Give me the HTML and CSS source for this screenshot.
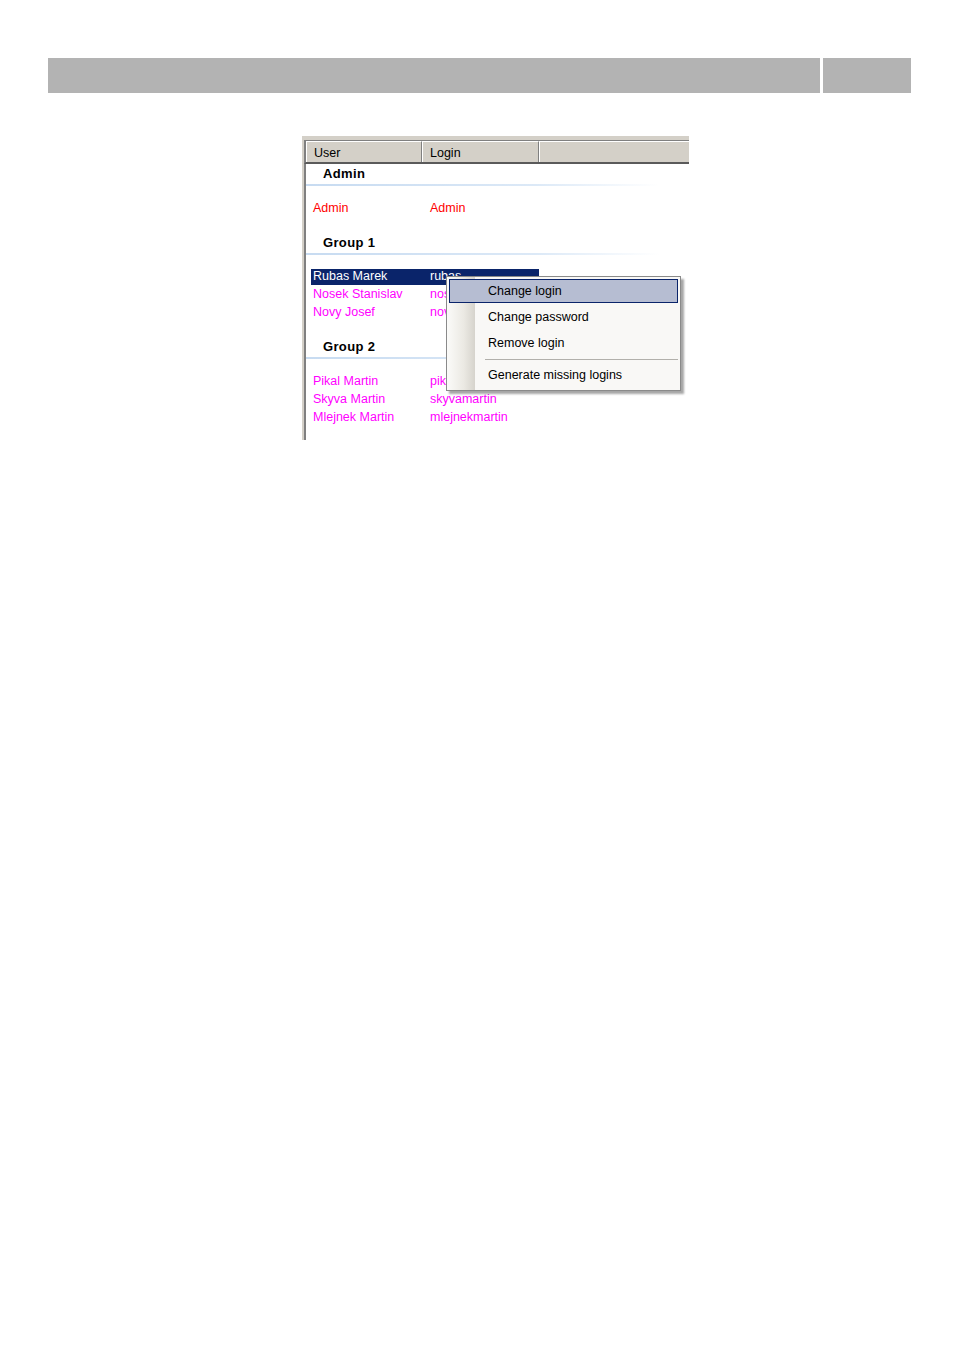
FILE: index.html
```html
<!DOCTYPE html>
<html>
<head>
<meta charset="utf-8">
<link rel="stylesheet" href="styles.css">
</head>
<body>
<div class="topbar">
  <div class="bar-main"></div>
  <div class="bar-side"></div>
</div>

<div class="shot">
  <div class="frame">
    <div class="header">
      <div class="hcol c1">User</div>
      <div class="hcol c2">Login</div>
      <div class="hcol c3"></div>
    </div>
    <div class="list">
      <div class="group">Admin</div>
      <div class="row red first"><span class="cu">Admin</span><span class="cl">Admin</span></div>

      <div class="group">Group 1</div>
      <div class="row sel first"><span class="cu">Rubas Marek</span><span class="cl">rubas</span></div>
      <div class="row mag"><span class="cu">Nosek Stanislav</span><span class="cl">nosekstanislav</span></div>
      <div class="row mag"><span class="cu">Novy Josef</span><span class="cl">novyjosef</span></div>

      <div class="group">Group 2</div>
      <div class="row mag first"><span class="cu">Pikal Martin</span><span class="cl">pikalmartin</span></div>
      <div class="row mag"><span class="cu">Skyva Martin</span><span class="cl">skyvamartin</span></div>
      <div class="row mag"><span class="cu">Mlejnek Martin</span><span class="cl">mlejnekmartin</span></div>
    </div>
  </div>

  <div class="menu">
    <div class="strip"></div>
    <div class="items">
      <div class="item hot">Change login</div>
      <div class="item">Change password</div>
      <div class="item">Remove login</div>
      <div class="sep"></div>
      <div class="item">Generate missing logins</div>
    </div>
  </div>
</div>
</body>
</html>
```
FILE: styles.css
```css
html, body {
  margin: 0;
  padding: 0;
  background: #ffffff;
}

body {
  font-family: "Liberation Sans", Arial, sans-serif;
}

.topbar {
  display: flex;
  gap: 3px;
  margin: 58px 0 0 48px;
  height: 35px;
}

.bar-main {
  width: 772px;
  background: #b3b3b3;
}

.bar-side {
  width: 88px;
  background: #b3b3b3;
}

.shot {
  position: relative;
  margin: 43px 0 0 302px;
  width: 387px;
  height: 304px;
  font-size: 12.5px;
}

.frame {
  height: 304px;
  box-sizing: border-box;
  border-top: 4px solid #d4d0c8;
  border-left: 2px solid #d4d0c8;
  display: flex;
  flex-direction: column;
}

.header {
  display: flex;
  height: 21px;
  border-top: 1px solid #808080;
  border-left: 2px solid #808080;
  background: #d4d0c8;
  border-bottom: 2px solid #5a5a5a;
  box-sizing: content-box;
}

.hcol {
  box-sizing: border-box;
  height: 100%;
  padding: 3px 0 0 7px;
  color: #000;
  border-top: 1px solid #ffffff;
  border-left: 1px solid #ffffff;
  border-right: 1px solid #808080;
  line-height: 16px;
}

.c1 { width: 116px; }
.c2 { width: 117px; }
.c3 { flex: 1; border-right: none; }

.list {
  flex: 1;
  border-left: 2px solid #808080;
  background: #fff;
  padding-top: 2px;
}

.group {
  font-weight: bold;
  font-size: 13px;
  letter-spacing: 0.35px;
  padding-left: 17px;
  height: 20px;
  line-height: 15px;
  box-sizing: border-box;
  border-bottom: 2px solid transparent;
  border-image: linear-gradient(to right, #c7dbf1 0%, #dce9f7 60%, rgba(255,255,255,0) 92%) 1;
  margin-bottom: 14px;
}

.group ~ .group {
  margin-top: 17px;
}

.row {
  display: flex;
  height: 18px;
  line-height: 17px;
  margin-left: 5px;
  width: 228px;
}

.row .cu {
  width: 118px;
  padding-left: 2px;
  box-sizing: border-box;
  white-space: nowrap;
  overflow: hidden;
}

.row .cl {
  padding-left: 1px;
  white-space: nowrap;
}

.red { color: #ff0000; }
.mag { color: #ff00ff; }

.sel {
  background: #0a246a;
  color: #ffffff;
  height: 16px;
  line-height: 15px;
  margin-bottom: 1px;
}

.menu {
  position: absolute;
  left: 144px;
  top: 140px;
  width: 235px;
  height: 115px;
  box-sizing: border-box;
  border: 1px solid #8a8a8a;
  background: #f9f8f6;
  display: flex;
  box-shadow: 3px 3px 2px rgba(0, 0, 0, 0.35);
  font-size: 12.5px;
  color: #000;
}

.strip {
  width: 28px;
  background: linear-gradient(to right, #fbfbf9 0%, #ebe9e3 60%, #d6d3cc 100%);
}

.items {
  flex: 1;
  padding-top: 2px;
}

.item {
  height: 26px;
  line-height: 24px;
  padding-left: 12px;
  box-sizing: border-box;
  border: 1px solid transparent;
  margin-right: 2px;
}

.item.hot {
  background: #b6bdd2;
  border-color: #0a246a;
  margin-left: -26px;
  padding-left: 38px;
  height: 24px;
  line-height: 22px;
  margin-bottom: 1px;
}

.sep {
  height: 1px;
  background: #b2b0ab;
  margin: 3px 2px 2px 10px;
}
```
